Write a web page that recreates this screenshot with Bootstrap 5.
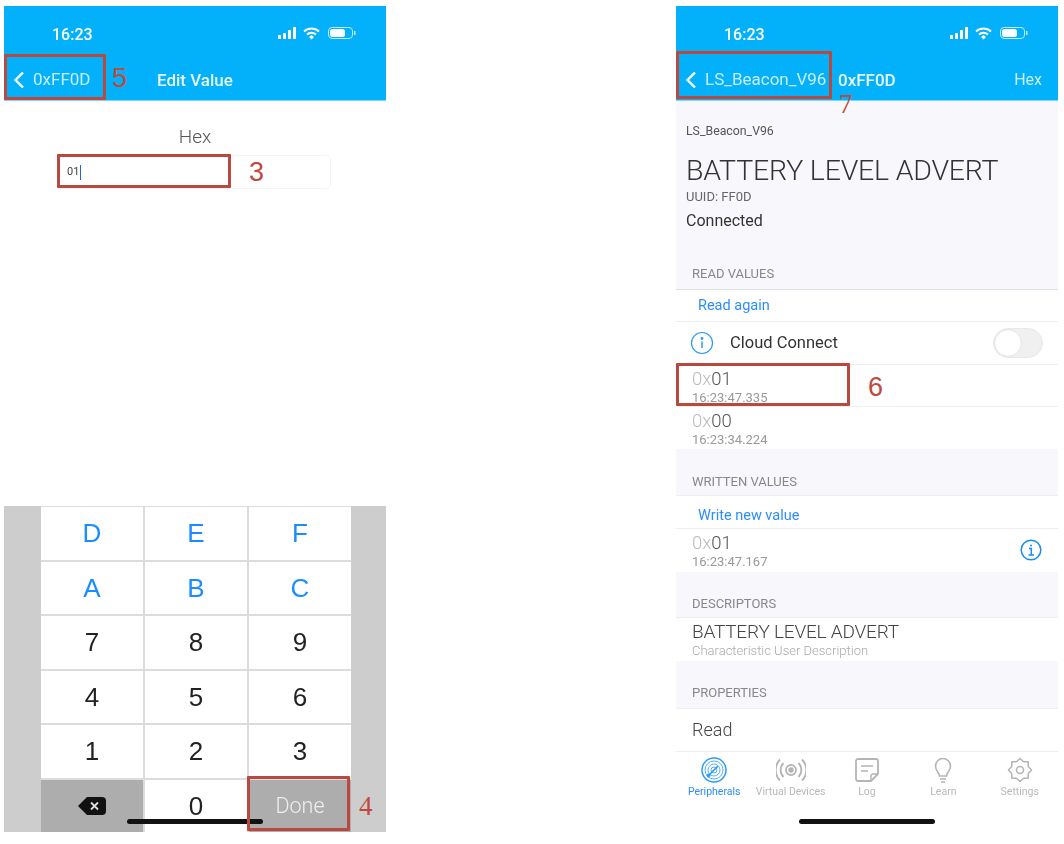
<!DOCTYPE html>
<html lang="en">
<head>
    <meta charset="UTF-8">
    <meta name="viewport" content="width=device-width, initial-scale=1.0">
    <title>LightBlue Hex Value</title>
    <link rel="stylesheet" href="https://cdn.jsdelivr.net/npm/bootstrap@5.3.0/dist/css/bootstrap.min.css">
    <style>
        html, body { height: 844px; overflow: hidden; background: #fff; }
        body { font-family: Roboto, "Liberation Sans", sans-serif; }
        .pair { padding: 6px 0 0 4px; gap: 290px; position: relative; height: 844px; }
        .phone { width: 382px; height: 826px; flex: none; filter: blur(.6px); }
        .blue-head { height: 95px; background: #02b1fa; color: #fff; border-bottom: 1px solid #7fd6fb; flex: none; }
        .status-row { height: 48px; padding: 21px 30px 0 48px; }
        .clock { font-size: 16px; font-weight: 500; line-height: 16px; }
        .head-row { height: 46px; padding-top: 6px; font-size: 17px; color: #c8eefd; position: relative; }
        .back-link { padding-left: 9px; gap: 8px; }
        .head-title { font-weight: 500; color: #e8f8ff; }
        .head-mid { position: absolute; left: 153px; top: 16px; line-height: 20px; }
        .head-char { left: 162px; }
        .head-end { position: absolute; right: 16px; top: 16px; line-height: 20px; font-size: 16px; }
        .hex-label { font-size: 19px; font-weight: 300; color: #555; text-align: center; margin-top: 25px; line-height: 22px; }
        .hex-input { width: 273px; height: 34px; margin: 7px 0 0 54px; font-size: 11px; padding: 0 8px; border: 1px solid #f4f4f4; border-radius: 5px; color: #444; display: flex; align-items: center; }
        .caret-bar { width: 1px; height: 15px; background: #2a5fe0; margin-left: 1px; }
        .keyboard { height: 326px; background: #cdcdcd; padding: 0 35px 0 37px; flex: none; }
        .key-grid { display: grid; grid-template-columns: repeat(3, 1fr); grid-auto-rows: 1fr; gap: 2px; height: 100%; padding-top: 1px; background: #dcdcdc; }
        .key-btn { background: #fff; border: 0; border-radius: 0; padding: 1px 0 0; font-size: 26px; font-weight: 400; color: #222; font-family: "Liberation Sans", sans-serif; display: flex; align-items: center; justify-content: center; }
        .key-hex { color: #1a8cff; }
        .key-dark { background: #adadad; }
        .key-done { font-size: 21.500px; color: #eee; font-family: Roboto, sans-serif; font-weight: 300; }
        .detail-body { background: #f8f8fc; color: #333; }
        .detail-top { height: 188px; padding: 0 10px; flex: none; }
        .peer-name { font-size: 12.300px; color: #555; margin-top: 23px; line-height: 14px; }
        .big-name { font-size: 28.500px; font-weight: 300; line-height: 34px; margin-top: 16px; color: #333; white-space: nowrap; letter-spacing: -.2px; }
        .uuid-line { font-size: 13px; color: #666; line-height: 16px; margin-top: 1px; }
        .conn-line { font-size: 16px; color: #333; line-height: 18px; margin-top: 7px; }
        .read-label { font-size: 13px; color: #888; line-height: 15px; margin: auto 0 8px 6px; }
        .value-list { background: #fff; flex: none; }
        .value-list .list-group-item { padding: 0; border-color: #eeeef0; background: #fff; }
        .row-action { height: 32px; padding-left: 22px !important; font-size: 14.500px; color: #2b8dff; display: flex; align-items: center; }
        .row-action-tall { height: 33px; padding-top: 7px !important; }
        .row-cloud { height: 43px; padding: 0 15px 0 14px !important; display: flex; align-items: center; font-size: 16.500px; color: #333; }
        .row-value { height: 42px; padding: 3px 16px 0 !important; position: relative; }
        .row-value-tall { height: 43px; }
        .row-written { padding-top: 0 !important; padding-bottom: 1px !important; }
        .val-main { font-size: 18.500px; font-weight: 300; line-height: 22px; color: #555; }
        .val-main span { color: #bbb; }
        .val-time { font-size: 13px; line-height: 13px; margin-top: 1px; color: #999; }
        .gap-head { font-size: 13px; color: #888; padding: 18px 0 0 16px; line-height: 15px; display: flex; align-items: center; flex: none; border-bottom: 1px solid #eeeef0; }
        .gap-47 { height: 47px; }
        .gap-46 { height: 46px; }
        .gap-48 { height: 48px; padding-top: 16px; }
        .desc-name { font-size: 19px; font-weight: 300; line-height: 24px; margin-top: -1px; color: #444; letter-spacing: -.2px; }
        .desc-sub { font-size: 13px; font-weight: 300; line-height: 13px; color: #aaa; }
        .read-row { height: 42px; padding: 0 16px 2px; font-size: 18px; font-weight: 300; color: #444; background: #fff; display: flex; align-items: center; flex: none; }
        .tab-strip { height: 81px; background: #fff; border-top: 1px solid #eee; flex: none; margin: 0; }
        .tab-item { padding: 5px 0 0; text-align: center; font-size: 10.500px; color: #b8b8b8; line-height: 11px; white-space: nowrap; }
        .tab-item svg { display: block; margin: 0 auto 3px; }
        .tab-on { color: #2b8dff; }
        .cloud-toggle { width: 50px !important; height: 30px; background-color: #f0f0f0; border-color: #e8e8e8; background-image: url("data:image/svg+xml,<svg xmlns='http://www.w3.org/2000/svg' viewBox='-4 -4 8 8'><circle r='3.800' fill='%23fff' stroke='%23ddd' stroke-width='.2'/></svg>") !important; }
        .home-bar { position: absolute; height: 5px; top: 819px; width: 136px; border-radius: 3px; background: #111; }
        .bar-left { left: 127px; }
        .bar-right { left: 799px; }
        .mark-box { position: absolute; border: 3px solid #b9483f; border-radius: 1px; }
        .mark-num { position: absolute; color: #c0483e; font-size: 27px; line-height: 24px; font-family: "Liberation Sans", sans-serif; }
        .mark-serif { font-family: "Liberation Serif", serif; }
        .box-5 { left: 4px; top: 54px; width: 102px; height: 46px; }
        .box-3 { left: 57px; top: 154px; width: 174px; height: 34px; }
        .box-4 { left: 247px; top: 776px; width: 103px; height: 55px; }
        .box-7 { left: 676px; top: 51px; width: 156px; height: 48px; }
        .box-6 { left: 676px; top: 363px; width: 174px; height: 43px; }
        .num-5 { left: 112px; top: 66px; }
        .num-3 { left: 249px; top: 160px; }
        .num-4 { left: 359px; top: 794px; }
        .num-7 { left: 839px; top: 92px; }
        .num-6 { left: 868px; top: 375px; }
    </style>
</head>
<body>

<div class="d-flex pair">

    <!-- left phone: edit value -->
    <div class="phone d-flex flex-column bg-white">
        <div class="blue-head">
            <div class="status-row d-flex justify-content-between align-items-start">
                <span class="clock">16:23</span>
                <svg width="78" height="14" viewBox="0 0 78 14" fill="#fff">
                    <rect x="0" y="8" width="3" height="4" rx=".5"/><rect x="5" y="6" width="3" height="6" rx=".5"/><rect x="10" y="3" width="3" height="9" rx=".5"/><rect x="15" y="0" width="3" height="12" rx=".5"/>
                    <path d="M26 4.5a11 11 0 0 1 15 0M29 7.5a7 7 0 0 1 9 0" fill="none" stroke="#fff" stroke-width="2"/><path d="M31 10l2.500-2 2.500 2-2.500 2.500z"/>
                    <rect x="50.500" y=".5" width="24" height="11" rx="3.500" fill="none" stroke="#bfeafd"/><rect x="52" y="2" width="15" height="8" rx="2.500"/><rect x="76" y="4" width="1.500" height="4" fill="#bfeafd"/>
                </svg>
            </div>
            <div class="head-row d-flex align-items-center">
                <div class="back-link d-flex align-items-center">
                    <svg width="12" height="18" viewBox="0 0 12 18" fill="none" stroke="#fff" stroke-width="2.400"><path d="M10 1.500 2.500 9l7.500 7.500"/></svg>
                    <span>0xFF0D</span>
                </div>
                <span class="head-mid head-title">Edit Value</span>
            </div>
        </div>
        <div class="flex-grow-1">
            <div class="hex-label">Hex</div>
            <div class="hex-input">01<span class="caret-bar"></span></div>
        </div>
        <div class="keyboard">
            <div class="key-grid">
                <button class="btn key-btn key-hex">D</button>
                <button class="btn key-btn key-hex">E</button>
                <button class="btn key-btn key-hex">F</button>
                <button class="btn key-btn key-hex">A</button>
                <button class="btn key-btn key-hex">B</button>
                <button class="btn key-btn key-hex">C</button>
                <button class="btn key-btn">7</button>
                <button class="btn key-btn">8</button>
                <button class="btn key-btn">9</button>
                <button class="btn key-btn">4</button>
                <button class="btn key-btn">5</button>
                <button class="btn key-btn">6</button>
                <button class="btn key-btn">1</button>
                <button class="btn key-btn">2</button>
                <button class="btn key-btn">3</button>
                <button class="btn key-btn key-dark">
                    <svg width="30" height="20" viewBox="0 0 30 20"><path d="M10 1h15a4 4 0 0 1 4 4v10a4 4 0 0 1-4 4H10L1 10z" fill="#111"/><path d="M14 6.500l7 7M21 6.500l-7 7" stroke="#ddd" stroke-width="1.800"/></svg>
                </button>
                <button class="btn key-btn">0</button>
                <button class="btn key-btn key-dark key-done">Done</button>
            </div>
        </div>
    </div>

    <!-- right phone: characteristic detail -->
    <div class="phone d-flex flex-column detail-body">
        <div class="blue-head">
            <div class="status-row d-flex justify-content-between align-items-start">
                <span class="clock">16:23</span>
                <svg width="78" height="14" viewBox="0 0 78 14" fill="#fff">
                    <rect x="0" y="8" width="3" height="4" rx=".5"/><rect x="5" y="6" width="3" height="6" rx=".5"/><rect x="10" y="3" width="3" height="9" rx=".5"/><rect x="15" y="0" width="3" height="12" rx=".5"/>
                    <path d="M26 4.5a11 11 0 0 1 15 0M29 7.5a7 7 0 0 1 9 0" fill="none" stroke="#fff" stroke-width="2"/><path d="M31 10l2.500-2 2.500 2-2.500 2.500z"/>
                    <rect x="50.500" y=".5" width="24" height="11" rx="3.500" fill="none" stroke="#bfeafd"/><rect x="52" y="2" width="15" height="8" rx="2.500"/><rect x="76" y="4" width="1.500" height="4" fill="#bfeafd"/>
                </svg>
            </div>
            <div class="head-row d-flex align-items-center">
                <div class="back-link d-flex align-items-center">
                    <svg width="12" height="18" viewBox="0 0 12 18" fill="none" stroke="#fff" stroke-width="2.400"><path d="M10 1.500 2.500 9l7.500 7.500"/></svg>
                    <span>LS_Beacon_V96</span>
                </div>
                <span class="head-mid head-title head-char">0xFF0D</span>
                <span class="head-end">Hex</span>
            </div>
        </div>

        <div class="detail-top d-flex flex-column">
            <div class="peer-name">LS_Beacon_V96</div>
            <div class="big-name">BATTERY LEVEL ADVERT</div>
            <div class="uuid-line">UUID: FF0D</div>
            <div class="conn-line">Connected</div>
            <div class="read-label">READ VALUES</div>
        </div>

        <div class="list-group list-group-flush value-list border-top">
            <div class="list-group-item row-action">Read again</div>
            <div class="list-group-item row-cloud">
                <svg class="me-2" width="24" height="24" viewBox="0 0 24 24" fill="none" stroke="#2b9bf5" stroke-width="1.200"><circle cx="12" cy="12" r="10.500"/><path d="M12 10.500V17" stroke-width="1.500"/><circle cx="12" cy="7.500" r=".8" fill="#2b9bf5"/></svg>
                <span class="ms-2">Cloud Connect</span>
                <div class="form-check form-switch ms-auto mb-0 p-0">
                    <input class="form-check-input m-0 cloud-toggle" type="checkbox" role="switch">
                </div>
            </div>
            <div class="list-group-item row-value">
                <div class="val-main"><span>0x</span>01</div>
                <div class="val-time">16:23:47.335</div>
            </div>
            <div class="list-group-item row-value">
                <div class="val-main"><span>0x</span>00</div>
                <div class="val-time">16:23:34.224</div>
            </div>
        </div>

        <div class="gap-head gap-47">WRITTEN VALUES</div>
        <div class="list-group list-group-flush value-list">
            <div class="list-group-item row-action row-action-tall">Write new value</div>
            <div class="list-group-item row-value row-value-tall row-written d-flex justify-content-between align-items-center">
                <div>
                    <div class="val-main"><span>0x</span>01</div>
                    <div class="val-time">16:23:47.167</div>
                </div>
                <svg width="22" height="22" viewBox="0 0 22 22" fill="none" stroke="#1a8cf0" stroke-width="1.500"><circle cx="11" cy="11" r="9.800"/><path d="M9 9.500h2.300V16M8.500 16h5.500" stroke-width="1.500"/><circle cx="11" cy="6.500" r="1" fill="#1a8cf0" stroke="none"/></svg>
            </div>
        </div>

        <div class="gap-head gap-46">DESCRIPTORS</div>
        <div class="list-group list-group-flush value-list">
            <div class="list-group-item row-value row-value-tall">
                <div class="desc-name">BATTERY LEVEL ADVERT</div>
                <div class="desc-sub">Characteristic User Description</div>
            </div>
        </div>

        <div class="gap-head gap-48">PROPERTIES</div>
        <div class="read-row">Read</div>

        <div class="row tab-strip row-cols-5 g-0">
            <div class="col tab-item tab-on">
                <svg width="26" height="26" viewBox="0 0 26 26" fill="none" stroke="#2b9bf5">
                    <circle cx="13" cy="13" r="12" stroke-width="1.500"/><circle cx="13" cy="13" r="9" stroke-width=".8"/><circle cx="13" cy="13" r="6" stroke-width=".8"/><circle cx="13" cy="13" r="3" stroke-width=".8"/>
                    <path d="M7 19 17 9" stroke-width="1.600"/><circle cx="7.500" cy="18.500" r="1.500" fill="#2b9bf5"/>
                </svg>
                Peripherals
            </div>
            <div class="col tab-item">
                <svg width="30" height="26" viewBox="0 0 30 26" fill="none" stroke="#b4b4b4" stroke-width="1.800">
                    <circle cx="15" cy="13" r="1.800" fill="#b4b4b4"/><circle cx="15" cy="13" r="5"/>
                    <path d="M7.500 6a10 10 0 0 0 0 14M22.500 6a10 10 0 0 1 0 14M4 2.500a15 15 0 0 0 0 21M26 2.500a15 15 0 0 1 0 21"/>
                </svg>
                Virtual Devices
            </div>
            <div class="col tab-item">
                <svg width="26" height="26" viewBox="0 0 26 26" fill="none" stroke="#b4b4b4" stroke-width="1.800">
                    <path d="M4 2h18a2 2 0 0 1 2 2v13l-7 7H4a2 2 0 0 1-2-2V4a2 2 0 0 1 2-2z"/><path d="M24 17h-5a2 2 0 0 0-2 2v5" stroke-width="1.400"/><path d="M7 9h12M7 14h7" stroke-width="1.500"/>
                </svg>
                Log
            </div>
            <div class="col tab-item">
                <svg width="26" height="26" viewBox="0 0 26 26" fill="none" stroke="#b4b4b4" stroke-width="1.600">
                    <path d="M9.500 19c0-3-4-5-4-10a7.500 7.500 0 0 1 15 0c0 5-4 7-4 10z"/><path d="M10 22h6M11 25h4"/>
                </svg>
                Learn
            </div>
            <div class="col tab-item">
                <svg width="26" height="26" viewBox="0 0 26 26" fill="none" stroke="#b4b4b4" stroke-width="1.500" stroke-linejoin="round">
                    <path d="M24.500 13 21.310 16.440 21.130 21.130 16.440 21.310 13 24.500 9.560 21.310 4.870 21.130 4.690 16.440 1.500 13 4.690 9.560 4.870 4.870 9.560 4.690 13 1.500 16.440 4.690 21.130 4.870 21.310 9.560z"/>
                    <circle cx="13" cy="13" r="3.500"/>
                </svg>
                Settings
            </div>
        </div>
    </div>

    <!-- home indicators -->
    <div class="home-bar bar-left"></div>
    <div class="home-bar bar-right"></div>

    <!-- red annotations -->
    <div class="mark-box box-5"></div><div class="mark-num num-5">5</div>
    <div class="mark-box box-3"></div><div class="mark-num num-3">3</div>
    <div class="mark-box box-4"></div><div class="mark-num mark-serif num-4">4</div>
    <div class="mark-box box-7"></div><div class="mark-num mark-serif num-7">7</div>
    <div class="mark-box box-6"></div><div class="mark-num num-6">6</div>
</div>

</body>
</html>
